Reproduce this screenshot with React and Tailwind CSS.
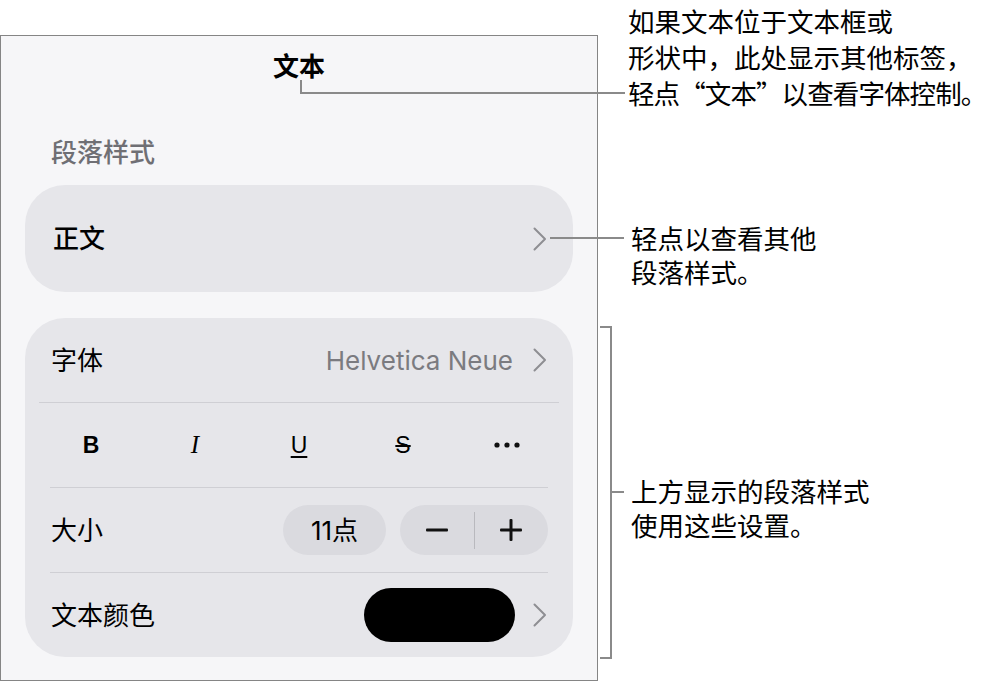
import React from "react";

const font = { fontFamily: '"Inter", "Noto Sans CJK SC", sans-serif' };

const Chevron = () => (
  <svg width="14" height="24" viewBox="0 0 14 24" fill="none">
    <path d="M1.5 1.5L12 12L1.5 22.5" stroke="#8e8e93" strokeWidth="2" strokeLinecap="round" strokeLinejoin="round" />
  </svg>
);

const Dots = () => (
  <svg width="26" height="6" viewBox="0 0 26 6">
    <circle cx="3" cy="3" r="2.6" fill="#111" />
    <circle cx="13" cy="3" r="2.6" fill="#111" />
    <circle cx="23" cy="3" r="2.6" fill="#111" />
  </svg>
);

const Minus = () => (
  <svg width="22" height="4" viewBox="0 0 22 4">
    <rect x="0" y="0.5" width="22" height="3" rx="1" fill="#111" />
  </svg>
);

const Plus = () => (
  <svg width="22" height="22" viewBox="0 0 22 22">
    <rect x="0" y="9.5" width="22" height="3" rx="1" fill="#111" />
    <rect x="9.5" y="0" width="3" height="22" rx="1" fill="#111" />
  </svg>
);

export default function App() {
  return (
    <div className="relative w-[987px] h-[684px] bg-white flex overflow-hidden" style={font}>
      {/* Inspector panel */}
      <div className="mt-[35px] w-[598px] shrink-0 self-start border border-[#858585] bg-[#f6f6f8] px-6 pb-[23px]">
        <div className="h-[60px] flex items-center justify-center text-[26px] font-semibold text-black">
          文本
        </div>

        <div className="mt-[40px] h-[32px] flex items-center pl-[26px] text-[26px] font-medium text-[#6f6f74]">
          段落样式
        </div>

        {/* Paragraph style */}
        <div className="mt-[17px] h-[107px] rounded-[40px] bg-[#e6e6ea] flex items-center justify-between pl-[28px] pr-[26px]">
          <span className="text-[26px] font-medium text-black">正文</span>
          <Chevron />
        </div>

        {/* Font settings */}
        <div className="mt-[26px] rounded-[40px] bg-[#e6e6ea] px-[25px]">
          <div className="h-[84px] flex items-center justify-between pl-[1px] pr-[1px]">
            <span className="text-[26px] text-black">字体</span>
            <div className="flex items-center gap-[20px]">
              <span className="text-[26px] text-[#7b7b80]">Helvetica Neue</span>
              <Chevron />
            </div>
          </div>

          <div className="h-[85px] border-t border-[#cfcfd4] -mx-[11px] grid grid-cols-5 items-center justify-items-center">
            <span className="text-[23px] font-bold text-black" style={{ fontFamily: '"Liberation Sans", sans-serif' }}>B</span>
            <span className="text-[25px] italic text-black" style={{ fontFamily: '"Liberation Serif", serif' }}>I</span>
            <span className="text-[23px] text-black underline underline-offset-[3px] decoration-[1.5px]" style={{ fontFamily: '"Liberation Sans", sans-serif' }}>U</span>
            <span className="text-[23px] text-black line-through decoration-[1.5px]" style={{ fontFamily: '"Liberation Sans", sans-serif' }}>S</span>
            <Dots />
          </div>

          <div className="h-[85px] border-t border-[#cfcfd4] flex items-center justify-between pl-[1px]">
            <span className="text-[26px] text-black">大小</span>
            <div className="flex items-center gap-[14px]">
              <div className="w-[103px] h-[50px] rounded-full bg-[#dadadf] flex items-center justify-center text-[26px] text-black">
                11点
              </div>
              <div className="w-[148px] h-[50px] rounded-full bg-[#dadadf] flex items-center">
                <div className="flex-1 flex items-center justify-center"><Minus /></div>
                <div className="w-[1px] h-[37px] bg-[#b9b9be]" />
                <div className="flex-1 flex items-center justify-center"><Plus /></div>
              </div>
            </div>
          </div>

          <div className="h-[85px] border-t border-[#cfcfd4] flex items-center justify-between pl-[1px] pr-[1px]">
            <span className="text-[26px] text-black">文本颜色</span>
            <div className="flex items-center gap-[18px]">
              <div className="w-[151px] h-[54px] rounded-full bg-black" />
              <Chevron />
            </div>
          </div>
        </div>
      </div>

      {/* Callouts */}
      <div className="min-w-0 flex-1 flex flex-col pl-[30px] pt-[3px] text-[26.5px] text-black whitespace-nowrap" style={{ fontFamily: '"Noto Sans CJK SC", sans-serif' }}>
        <div className="leading-[36px]">
          <div>如果文本位于文本框或</div>
          <div>形状中，此处显示其他标签，</div>
          <div className="tracking-[-0.9px]">轻点“文本”以查看字体控制。</div>
        </div>
        <div className="mt-[110px] ml-[3px] leading-[34px]">
          <div>轻点以查看其他</div>
          <div>段落样式。</div>
        </div>
        <div className="mt-[185px] ml-[3px] leading-[34px]">
          <div>上方显示的段落样式</div>
          <div>使用这些设置。</div>
        </div>
      </div>

      {/* Leader lines */}
      <div className="absolute left-[300px] top-[80px] w-[2px] h-[14px] bg-[#8a8a8a]" />
      <div className="absolute left-[300px] top-[92px] w-[325px] h-[2px] bg-[#8a8a8a]" />
      <div className="absolute left-[550px] top-[237px] w-[74px] h-[2px] bg-[#8a8a8a]" />
      <div className="absolute left-[610px] top-[326px] w-[2px] h-[333px] bg-[#8a8a8a]" />
      <div className="absolute left-[600px] top-[326px] w-[12px] h-[2px] bg-[#8a8a8a]" />
      <div className="absolute left-[600px] top-[657px] w-[12px] h-[2px] bg-[#8a8a8a]" />
      <div className="absolute left-[610px] top-[491px] w-[14px] h-[2px] bg-[#8a8a8a]" />
    </div>
  );
}
